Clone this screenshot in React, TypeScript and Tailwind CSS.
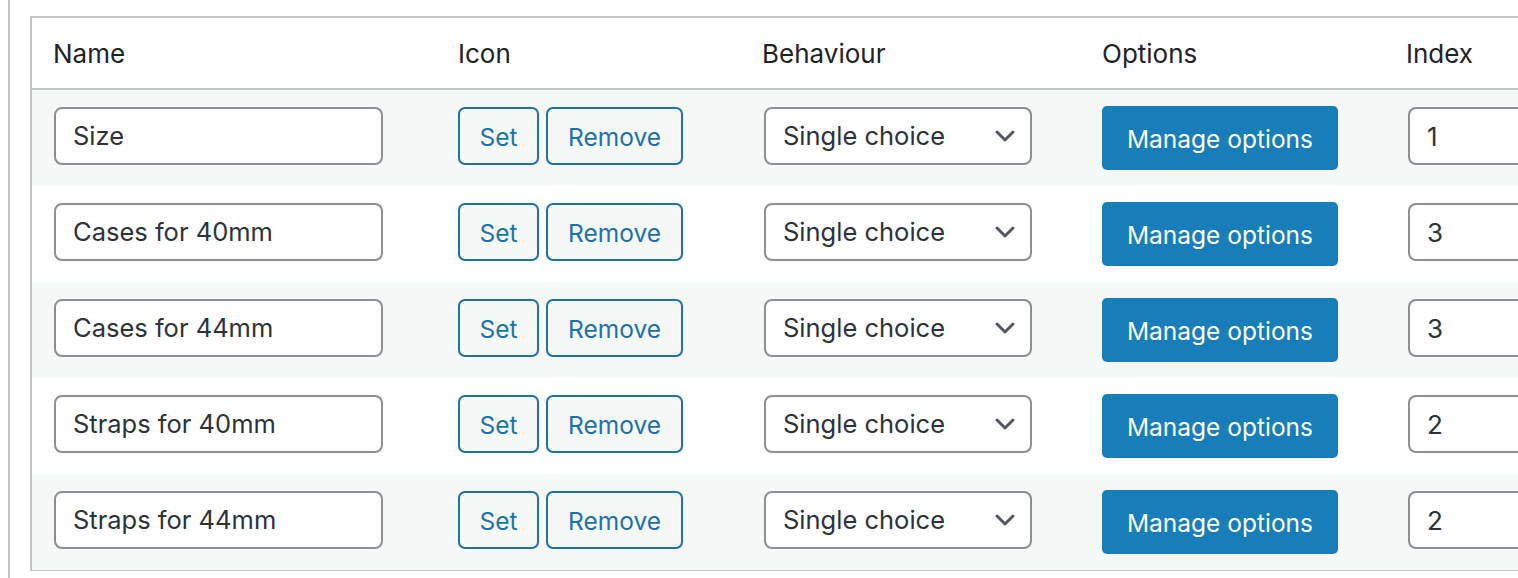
import React from "react";

const rows = [
  { name: "Size", index: "1" },
  { name: "Cases for 40mm", index: "3" },
  { name: "Cases for 44mm", index: "3" },
  { name: "Straps for 40mm", index: "2" },
  { name: "Straps for 44mm", index: "2" },
];

function Chevron() {
  return (
    <svg width="22" height="14" viewBox="0 0 22 14" fill="none" stroke="#50575e" strokeWidth="3" strokeLinecap="round" strokeLinejoin="round">
      <path d="M3 3l8 8 8-8" />
    </svg>
  );
}

export default function App() {
  return (
    <div className="h-[578px] w-[1518px] overflow-hidden bg-white font-['Inter','Noto_Sans',sans-serif] text-[#1d2327]">
      <div className="ml-[8px] flex h-full border-l-2 border-[#c3c4c7] pt-[16px]">
        <div className="ml-[20px] h-[555px] w-[1500px] shrink-0 border-2 border-r-0 border-[#c3c4c7]">
          {/* header */}
          <div className="flex h-[72px] items-center border-b-2 border-[#c3c4c7] text-[26px]">
            <div className="w-[405px] shrink-0 pl-[21px]">Name</div>
            <div className="w-[305px] shrink-0 pl-[21px]">Icon</div>
            <div className="w-[339px] shrink-0 pl-[20px]">Behaviour</div>
            <div className="w-[304px] shrink-0 pl-[21px]">Options</div>
            <div className="shrink-0 pl-[21px]">Index</div>
          </div>
          {rows.map((r, i) => (
            <div
              key={i}
              className={`flex h-[96px] items-start pt-[17px] ${i % 2 === 0 ? "bg-[#f6f7f7]" : "bg-white"}`}
            >
              <div className="w-[405px] shrink-0 pl-[22px]">
                <div className="flex h-[58px] w-[329px] items-center rounded-[8px] border-2 border-[#8c8f94] bg-white pl-[17px] text-[25.5px] text-[#2c3338]">
                  {r.name}
                </div>
              </div>
              <div className="flex w-[305px] shrink-0 gap-[7px] pl-[21px]">
                <button className="flex h-[58px] w-[81px] items-center justify-center rounded-[7px] border-2 border-[#1d72a5] bg-[#f6f7f7] pt-[2px] text-[24.5px] text-[#1d72a5]">
                  Set
                </button>
                <button className="flex h-[58px] w-[137px] items-center justify-center rounded-[7px] border-2 border-[#1d72a5] bg-[#f6f7f7] pt-[2px] text-[24.5px] text-[#1d72a5]">
                  Remove
                </button>
              </div>
              <div className="w-[339px] shrink-0 pl-[22px]">
                <div className="flex h-[58px] w-[268px] items-center justify-between rounded-[8px] border-2 border-[#8c8f94] bg-white pl-[17px] pr-[14px] text-[25.5px] text-[#2c3338]">
                  <span>Single choice</span>
                  <Chevron />
                </div>
              </div>
              <div className="w-[304px] shrink-0 pl-[21px]">
                <button className="-mt-[1px] flex h-[64px] w-[236px] items-center justify-center rounded-[5px] bg-[#187eb9] pt-[3px] text-[24.5px] text-white">
                  Manage options
                </button>
              </div>
              <div className="shrink-0 pl-[23px]">
                <div className="flex h-[58px] w-[140px] items-center rounded-[8px] border-2 border-[#8c8f94] bg-white pl-[17px] text-[26px] text-[#2c3338]">
                  {r.index}
                </div>
              </div>
            </div>
          ))}
        </div>
      </div>
    </div>
  );
}
